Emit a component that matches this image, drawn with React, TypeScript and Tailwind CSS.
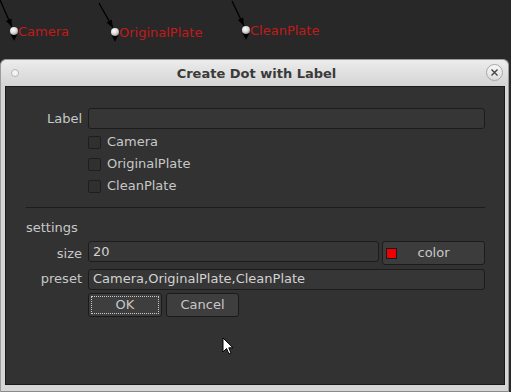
import React from "react";

const FONT = { fontFamily: '"DejaVu Sans", "Liberation Sans", sans-serif' };

type Node = { x: number; y: number; from: [number, number]; label: string; tx: number; ty: number };

const nodes: Node[] = [
  { x: 14, y: 31, from: [0, 0], label: "Camera", tx: 18, ty: 24 },
  { x: 115, y: 32, from: [99, 3], label: "OriginalPlate", tx: 119, ty: 25 },
  { x: 246, y: 30, from: [232, 1], label: "CleanPlate", tx: 250, ty: 23 },
];

function arrowHead(fx: number, fy: number, tx: number, ty: number) {
  const dx = tx - fx;
  const dy = ty - fy;
  const len = Math.hypot(dx, dy);
  const ux = dx / len;
  const uy = dy / len;
  const bx = tx - ux * 8;
  const by = ty - uy * 8;
  const px = -uy * 3;
  const py = ux * 3;
  return `${tx},${ty} ${bx + px},${by + py} ${bx - px},${by - py}`;
}

const NodeGraph = () => (
  <div className="relative h-[59px] w-full">
    <svg className="absolute left-0 top-0" width="511" height="59">
      <defs>
        <radialGradient id="dotg" cx="40%" cy="35%" r="70%">
          <stop offset="0%" stopColor="#ffffff" />
          <stop offset="60%" stopColor="#d8d8d8" />
          <stop offset="100%" stopColor="#8a8a8a" />
        </radialGradient>
      </defs>
      {nodes.map((n) => {
        const tipX = n.x - 2;
        const tipY = n.y - 4;
        return (
          <g key={n.label}>
            <line x1={n.from[0]} y1={n.from[1]} x2={tipX} y2={tipY} stroke="#000" strokeWidth="1.3" />
            <polygon points={arrowHead(n.from[0], n.from[1], tipX, tipY)} fill="#000" />
            <polygon points={`${n.x - 3.5},${n.y + 3} ${n.x + 3.5},${n.y + 3} ${n.x},${n.y + 10}`} fill="#000" />
            <circle cx={n.x} cy={n.y} r="4" fill="url(#dotg)" />
          </g>
        );
      })}
    </svg>
    {nodes.map((n) => (
      <span
        key={n.label}
        className="absolute text-[13px] leading-4 text-[#c21a1a]"
        style={{ left: n.tx, top: n.ty }}
      >
        {n.label}
      </span>
    ))}
  </div>
);

const Field = ({ value = "", className = "" }: { value?: string; className?: string }) => (
  <div
    className={`flex h-[21px] items-center rounded-[3px] border border-[#1c1c1c] bg-[#363636] px-[4px] text-[13px] text-[#d2d2d2] ${className}`}
  >
    {value}
  </div>
);

const Check = ({ label }: { label: string }) => (
  <div className="flex h-[22px] items-center gap-[6px]">
    <div className="h-[13px] w-[13px] rounded-[2px] border border-[#1e1e1e] bg-[#303030]" />
    <span className="text-[13px] text-[#c8c8c8]">{label}</span>
  </div>
);

const Row = ({ label, children, h = "h-[21px]" }: { label: string; children: React.ReactNode; h?: string }) => (
  <div className={`flex ${h} items-center gap-[6px]`}>
    <span className="w-[56px] shrink-0 text-right text-[13px] text-[#c8c8c8]">{label}</span>
    {children}
  </div>
);

export default function App() {
  return (
    <div className="relative h-[392px] w-[511px] overflow-hidden bg-[#282828]" style={FONT}>
      <NodeGraph />
      <div className="flex h-[333px] w-[509px] flex-col rounded-t-[6px] border border-b-0 border-[#9c9c9c] bg-[#d6d6d6]">
        <div className="relative flex h-[26px] items-center justify-center rounded-t-[6px] bg-gradient-to-b from-[#ececec] to-[#d4d4d4]">
          <div className="absolute left-[10px] top-[9px] h-[8px] w-[8px] rounded-full border border-[#b4b4b4] bg-[#f4f4f4]" />
          <span className="pl-[4px] pt-[2px] text-[13px] font-bold text-[#3a3a3a]">Create Dot with Label</span>
          <div className="absolute right-[5px] top-[4px] flex h-[17px] w-[17px] items-center justify-center rounded-full border border-[#a8a8a8] bg-gradient-to-b from-[#f8f8f8] to-[#dcdcdc]">
            <svg width="9" height="9" viewBox="0 0 9 9">
              <path d="M1.5 1.5 L7.5 7.5 M7.5 1.5 L1.5 7.5" stroke="#444" strokeWidth="1.4" />
            </svg>
          </div>
        </div>
        <div className="ml-[4px] mr-[3px] flex h-[299px] flex-col border border-[#1a1a1a] bg-[#323232] pl-[20px] pr-[19px] pt-[21px]">
          <Row label="Label">
            <Field className="flex-1" />
          </Row>
          <div className="ml-[62px] mt-[2px] flex flex-col">
            <Check label="Camera" />
            <Check label="OriginalPlate" />
            <Check label="CleanPlate" />
          </div>
          <div className="mt-[10px] h-px bg-[#1c1c1c]" />
          <div className="mt-[12px] text-[13px] leading-4 text-[#c8c8c8]">settings</div>
          <div className="mt-[5px] flex h-[24px] gap-[6px]">
            <span className="w-[56px] shrink-0 self-center pt-[2px] text-right text-[13px] text-[#c8c8c8]">size</span>
            <Field value="20" className="h-[20px] flex-1" />
            <button className="relative -ml-[3px] flex h-[24px] w-[103px] items-center justify-center rounded-[3px] border border-[#1c1c1c] bg-[#3c3c3c] text-[13px] text-[#c8c8c8]">
              <span className="absolute left-[3px] top-[6px] h-[11px] w-[11px] border border-[#1a1a1a] bg-[#ee0000]" />
              color
            </button>
          </div>
          <div className="mt-[4px]">
            <Row label="preset" h="h-[20px]">
              <Field value="Camera,OriginalPlate,CleanPlate" className="h-[20px] flex-1" />
            </Row>
          </div>
          <div className="ml-[62px] mt-[4px] flex gap-[4px]">
            <button className="flex h-[24px] w-[74px] items-center justify-center rounded-[3px] border border-[#1a1a1a] bg-[#3e3e3e] p-[2px]">
              <span className="flex h-full w-full items-center justify-center border border-dotted border-[#c8c8c8] text-[13px] text-[#c8c8c8]">
                OK
              </span>
            </button>
            <button className="flex h-[24px] w-[73px] items-center justify-center rounded-[3px] border border-[#1a1a1a] bg-[#3e3e3e] text-[13px] text-[#c8c8c8]">
              Cancel
            </button>
          </div>
        </div>
        <div className="flex-1 border-b border-[#8a8a8a]" />
      </div>
      <svg className="absolute left-[222px] top-[337px]" width="14" height="20" viewBox="0 0 14 20">
        <path d="M1 1 L1 15 L4.5 11.5 L7 17 L9 16 L6.8 10.8 L11 10.8 Z" fill="#fff" stroke="#000" strokeWidth="1" strokeLinejoin="round" />
      </svg>
    </div>
  );
}
